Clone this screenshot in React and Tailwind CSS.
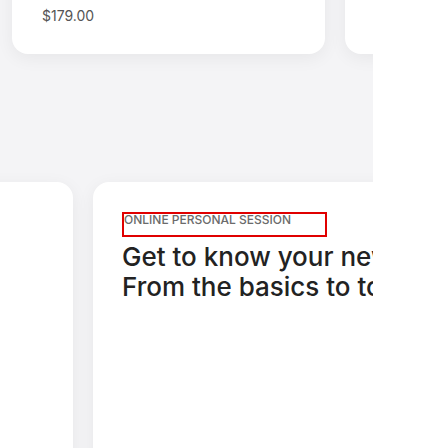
export default function App() {
  const card = "shrink-0 w-[313px] bg-white rounded-2xl shadow-[0_4px_18px_rgba(0,0,0,0.06)]";
  return (
    <div className="w-[448px] h-[448px] bg-white" style={{ fontFamily: "Inter, 'Noto Sans', sans-serif" }}>
      <div className="w-[373px] h-[448px] overflow-hidden bg-[#f4f4f6] flex flex-col">
        <div className="flex gap-[20px] pl-[12px] -mt-[60px]">
          <div className={`${card} pt-[66px] pb-[28px] pl-[30px]`}>
            <div className="text-[14px] leading-[20px] text-[#555]">$179.00</div>
          </div>
          <div className={`${card} h-[114px]`}></div>
        </div>
        <div className="flex gap-[20px] -ml-[240px] mt-[128px]">
          <div className={`${card} h-[400px]`}></div>
          <div className={`${card} h-[400px] pt-[30px] pl-[29px]`}>
            <div className="w-[205px] h-[25px] border-2 border-[#e00000]">
              <div className="text-[12px] leading-[12px] font-medium text-[#6b6b6b] uppercase whitespace-nowrap">
                Online Personal Session
              </div>
            </div>
            <div className="mt-[5px] text-[26px] leading-[30px] font-medium text-[#222] whitespace-nowrap">
              <div>Get to know your new</div>
              <div>From the basics to top</div>
            </div>
          </div>
        </div>
      </div>
    </div>
  );
}
